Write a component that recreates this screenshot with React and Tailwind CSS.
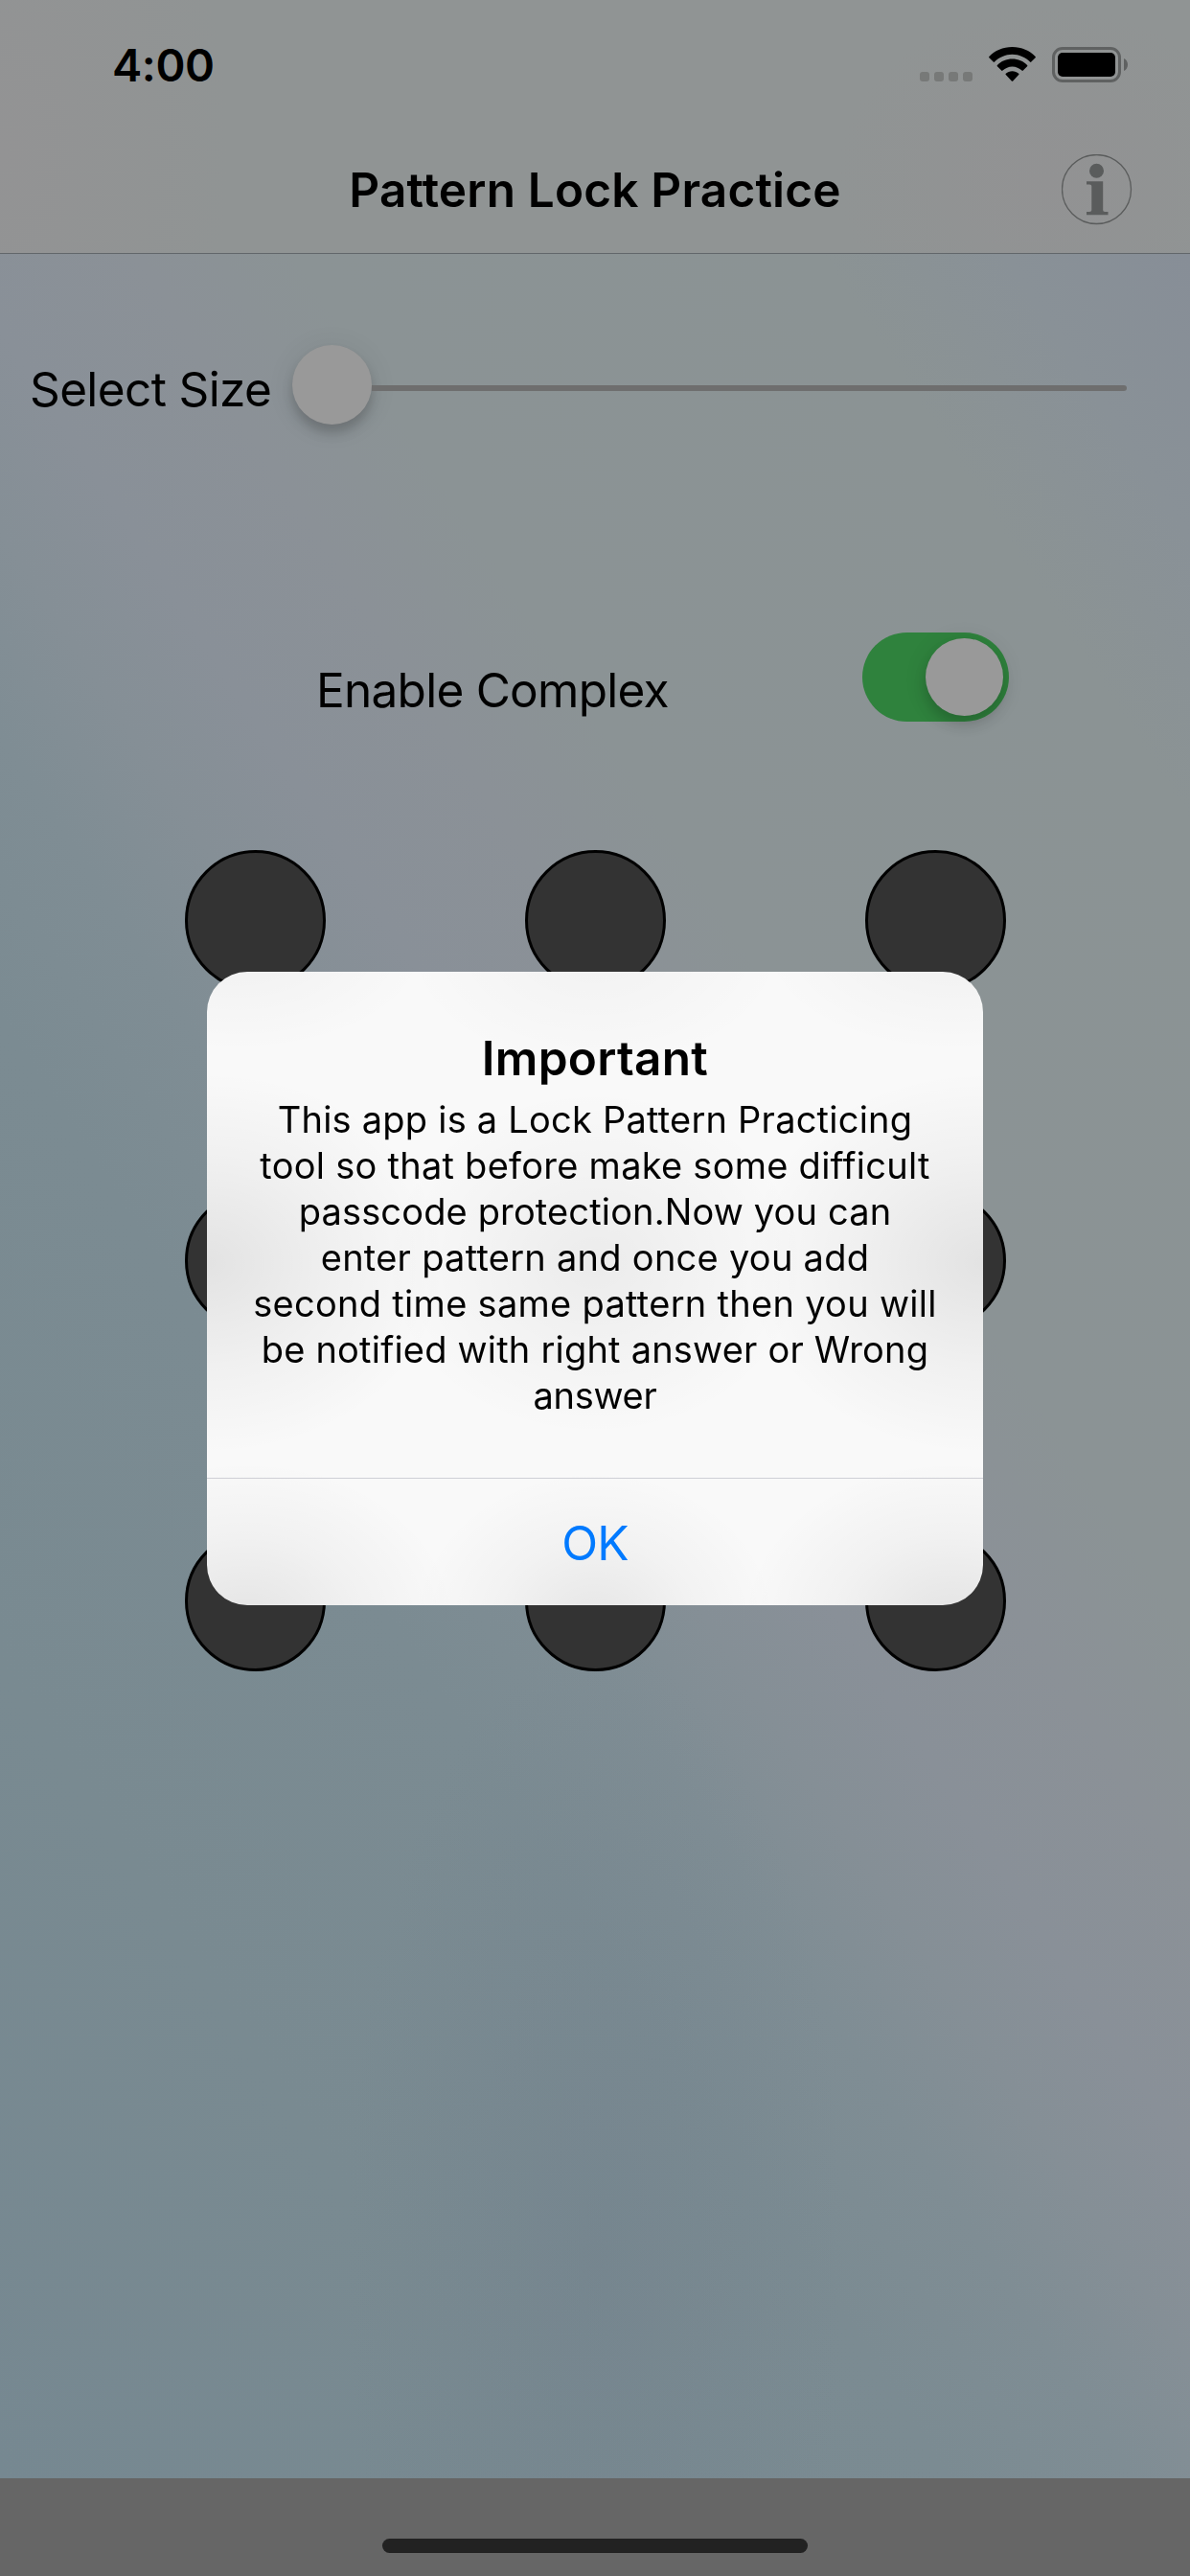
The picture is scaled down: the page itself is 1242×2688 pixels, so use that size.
import React from "react";

const MESSAGE = [
  { text: "This app is a Lock Pattern Practicing", tracking: "tracking-[0.223px]" },
  { text: "tool so that before make some difficult", tracking: "tracking-[0.258px]" },
  { text: "passcode protection.Now you can", tracking: "tracking-[0.145px]" },
  { text: "enter pattern and once you add", tracking: "tracking-[0.268px]" },
  { text: "second time same pattern then you will", tracking: "tracking-[0.287px]" },
  { text: "be notified with right answer or Wrong", tracking: "tracking-[0.203px]" },
  { text: "answer", tracking: "tracking-[-0.28px]" },
];

function WifiIcon() {
  return (
    <svg className="h-[36px] w-[49px]" viewBox="0 0 49 36">
      <path d="M24.500 0C34.200 0 42.700 3.800 48.600 9.900a.9.9 0 0 1 0 1.300L44.300 15.600a.9.9 0 0 1-1.300 0C38.200 10.900 31.700 7.800 24.500 7.800S10.800 10.900 6 15.600a.9.9 0 0 1-1.300 0L.4 11.200a.9.9 0 0 1 0-1.300C6.300 3.800 14.800 0 24.500 0Z" />
      <path d="M24.500 12.600c6.100 0 11.600 2.400 15.600 6.300a.9.9 0 0 1 0 1.300l-4.300 4.400a.9.9 0 0 1-1.300 0c-2.600-2.500-6.100-4.200-10-4.200s-7.400 1.700-10 4.200a.9.9 0 0 1-1.300 0l-4.300-4.400a.9.9 0 0 1 0-1.300c4-3.900 9.500-6.300 15.600-6.300Z" />
      <path d="M24.500 25.200c2.600 0 4.900.9 6.700 2.500a.9.9 0 0 1 0 1.300l-6 6.500a1 1 0 0 1-1.400 0l-6-6.500a.9.9 0 0 1 0-1.300c1.800-1.600 4.100-2.500 6.700-2.500Z" />
    </svg>
  );
}

function StatusBar() {
  return (
    <div className="flex h-[136px] items-center justify-between pr-[65px] pl-[117px]">
      <span className="text-[47px] leading-[60px] font-semibold tracking-[-0.43px]">4:00</span>
      <div className="flex items-center">
        <div className="mt-[24px] flex gap-[5px]">
          {[0, 1, 2, 3].map((i) => (
            <span key={i} className="h-[10px] w-[10px] rounded-[3px] bg-[#777978]" />
          ))}
        </div>
        <div className="mb-[2px] ml-[17px]">
          <WifiIcon />
        </div>
        <div className="mb-[1px] ml-[17px] h-[37px] w-[72px] rounded-[11px] border-[3px] border-[#5f6161] p-[3px]">
          <div className="h-full w-full rounded-[5px] bg-black" />
        </div>
        <svg className="mb-[1px] ml-[3px] h-[13px] w-[4px]" viewBox="0 0 4 13">
          <path d="M0 0C2.500 1.200 4 3.600 4 6.500S2.500 11.800 0 13Z" fill="#5f6161" />
        </svg>
      </div>
    </div>
  );
}

function InfoIcon() {
  return (
    <svg className="h-[74px] w-[74px]" viewBox="0 0 74 74" fill="#5a5c5c">
      <circle cx="36.500" cy="36.500" r="36" fill="none" stroke="#5a5c5c" strokeWidth="1.300" />
      <circle cx="36.500" cy="17.200" r="7.500" />
      <path d="M26 28.200h17.200v29.600c0 1.500.6 2.200 2 2.200h3.300v3.200H26V60h3c1.600 0 2.300-.7 2.300-2.200V33.600c0-1.500-.7-2.200-2.300-2.200h-3Z" />
    </svg>
  );
}

function Alert() {
  return (
    <div className="fixed inset-0 flex items-center justify-center">
      <div
        role="alertdialog"
        className="flex h-[661px] w-[810px] flex-col overflow-hidden rounded-[42px] bg-[#f9f9f9] bg-[radial-gradient(ellipse_250px_200px_at_0%_46%,rgba(0,0,0,0.09),rgba(0,0,0,0.035)_55%,transparent),radial-gradient(ellipse_220px_180px_at_50%_46%,rgba(0,0,0,0.055),rgba(0,0,0,0.022)_55%,transparent),radial-gradient(ellipse_250px_200px_at_100%_46%,rgba(0,0,0,0.09),rgba(0,0,0,0.035)_55%,transparent),radial-gradient(ellipse_220px_170px_at_5%_103%,rgba(0,0,0,0.085),rgba(0,0,0,0.03)_55%,transparent),radial-gradient(ellipse_190px_160px_at_50%_103%,rgba(0,0,0,0.08),rgba(0,0,0,0.028)_55%,transparent),radial-gradient(ellipse_220px_170px_at_96%_103%,rgba(0,0,0,0.09),rgba(0,0,0,0.03)_55%,transparent),radial-gradient(ellipse_200px_110px_at_4%_-4%,rgba(0,0,0,0.035),transparent),radial-gradient(ellipse_200px_130px_at_50%_-4%,rgba(0,0,0,0.03),transparent),radial-gradient(ellipse_200px_110px_at_96%_-4%,rgba(0,0,0,0.035),transparent)] text-center"
      >
        <div className="flex h-[528px] flex-col pt-[60px]">
          <h2 className="text-[49.500px] leading-[60px] font-semibold tracking-[0.28px]">Important</h2>
          <div className="mt-[10px] text-[38px] leading-[48px] whitespace-nowrap">
            {MESSAGE.map((line) => (
              <p key={line.text} className={line.tracking}>
                {line.text}
              </p>
            ))}
          </div>
        </div>
        <button className="flex-1 border-t border-[#cfd0d6] pt-[2px] text-[49.500px] leading-[60px] tracking-[-0.85px] text-[#007aff]">
          OK
        </button>
      </div>
    </div>
  );
}

export default function App() {
  return (
    <div className="flex h-[2688px] w-[1242px] flex-col overflow-hidden font-['Inter',sans-serif] text-black">
      <header className="flex h-[265px] flex-col border-b border-[#62676b] bg-[radial-gradient(ellipse_240px_420px_at_0%_60%,#939394,transparent),radial-gradient(ellipse_220px_180px_at_88%_70%,#929293,transparent)] bg-[#909494]">
        <StatusBar />
        <div className="grid flex-1 grid-cols-[1fr_auto_1fr] items-center">
          <h1 className="col-start-2 mb-[4px] text-[49.500px] leading-[60px] font-semibold tracking-[0.187px]">
            Pattern Lock Practice
          </h1>
          <button className="mr-[60px] mb-[5px] justify-self-end">
            <InfoIcon />
          </button>
        </div>
      </header>

      <main className="flex h-[2321px] flex-col bg-[radial-gradient(ellipse_260px_640px_at_50%_90%,rgba(112,127,139,0.42),transparent),linear-gradient(237deg,#878e97_0%,#899197_7%,#8b9394_14%,#8b9395_34%,#8b9197_40%,#899098_47%,#858f96_52%,#7f8d94_57%,#7b8b92_64%,#798a91_80%,#768891_100%)]">
        <div className="mt-[95px] flex h-[90px] items-center pr-[66px] pl-[31px]">
          <span className="w-[274px] pt-[2px] text-[49.500px] leading-[60px] tracking-[-0.622px] whitespace-nowrap">
            Select Size
          </span>
          <div className="flex flex-1 items-center">
            <div className="mb-[7px] h-[83px] w-[83px] rounded-full bg-[#999] shadow-[0_9px_12px_rgba(0,0,0,0.18),0_3px_30px_rgba(0,0,0,0.08)]" />
            <div className="h-[6px] flex-1 rounded-r-full bg-[#6e6e6e]" />
          </div>
        </div>

        <div className="mt-[210px] flex h-[93px] items-start justify-between pr-[189px] pl-[330px]">
          <span className="mt-[30px] text-[49.500px] leading-[60px] tracking-[-0.74px] whitespace-nowrap">
            Enable Complex
          </span>
          <div className="flex h-[93px] w-[153px] items-center justify-end rounded-full bg-[#2f823d] pr-[6px]">
            <div className="h-[81px] w-[81px] rounded-full bg-[#999] shadow-[0_9px_14px_rgba(0,0,0,0.14),0_3px_24px_rgba(0,0,0,0.1)]" />
          </div>
        </div>

        <div className="mt-[133.500px] grid grid-cols-3 gap-[208px] self-center">
          {Array.from({ length: 9 }, (_, i) => (
            <div key={i} className="h-[147px] w-[147px] rounded-full border-[3px] border-black bg-[#333]" />
          ))}
        </div>
      </main>

      <footer className="flex h-[102px] items-end justify-center bg-[#666] pb-[24px]">
        <div className="h-[15px] w-[444px] rounded-full bg-[#222]" />
      </footer>

      <Alert />
    </div>
  );
}
